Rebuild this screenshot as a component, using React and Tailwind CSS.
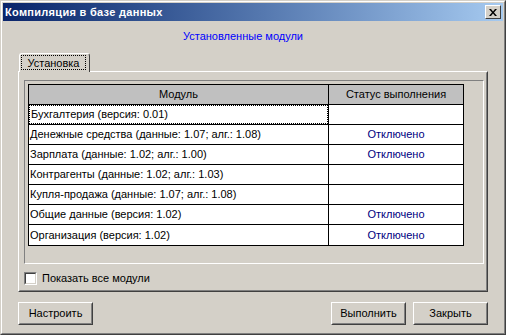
import React from 'react';

const rows = [
    { name: 'Бухгалтерия (версия: 0.01)', status: '', focus: true },
    { name: 'Денежные средства (данные: 1.07; алг.: 1.08)', status: 'Отключено' },
    { name: 'Зарплата (данные: 1.02; алг.: 1.00)', status: 'Отключено' },
    { name: 'Контрагенты (данные: 1.02; алг.: 1.03)', status: '' },
    { name: 'Купля-продажа (данные: 1.07; алг.: 1.08)', status: '' },
    { name: 'Общие данные (версия: 1.02)', status: 'Отключено' },
    { name: 'Организация (версия: 1.02)', status: 'Отключено' },
];

const font = { fontFamily: '"Liberation Sans", Arial, sans-serif' };

const Button = ({ children }) => (
    <div className="w-[75px] h-[23px] border border-t-white border-l-white border-r-[#404040] border-b-[#404040]">
        <div className="w-full h-full border border-transparent border-r-[#808080] border-b-[#808080] flex items-center justify-center text-[11px] text-black">
            {children}
        </div>
    </div>
);

const App = () => {
    return (
        <div className="w-[506px] h-[335px] bg-[#d4d0c8] border border-t-[#d4d0c8] border-l-[#d4d0c8] border-r-[#404040] border-b-[#404040]" style={font}>
            <div className="w-full h-full border border-t-white border-l-white border-r-[#808080] border-b-[#808080] p-px flex flex-col">
                {/* title bar */}
                <div className="h-[18px] flex items-center justify-between bg-gradient-to-r from-[#0a246a] to-[#a6caf0] pl-[2px] pr-[2px]">
                    <span className="text-white font-bold text-[11px] leading-[13px] tracking-[0.3px]">Компиляция в базе данных</span>
                    <div className="w-[16px] h-[14px] bg-[#d4d0c8] border border-t-white border-l-white border-r-[#404040] border-b-[#404040] flex items-center justify-center">
                        <svg width="8" height="7" viewBox="0 0 8 7">
                            <path d="M0 0h2l2 2.5L6 0h2L5 3.5 8 7H6L4 4.5 2 7H0l3-3.5z" fill="#000" />
                        </svg>
                    </div>
                </div>

                <div className="flex-1 flex flex-col px-[15px]">
                    <div className="h-[32px] pt-[9px] pr-[20px] text-center text-[11px] leading-[13px] text-[#0000ff]">Установленные модули</div>

                    {/* tab strip */}
                    <div className="h-[18px] flex relative z-10">
                        <div className="w-[71px] h-[19px] ml-px bg-[#d4d0c8] border border-b-0 border-t-white border-l-white border-r-[#404040] rounded-t-[3px] pt-px pl-px">
                            <div className="w-[65px] h-[15px] border border-dotted border-black flex items-center justify-center text-[11px] leading-[12px] text-black">Установка</div>
                        </div>
                    </div>

                    {/* tab panel */}
                    <div className="h-[221px] border border-t-white border-l-white border-r-[#404040] border-b-[#404040]">
                        <div className="w-full h-full border border-transparent border-r-[#808080] border-b-[#808080] pl-[4px] pr-[2px] pt-[7px] flex flex-col">
                            <div className="h-[184px] border border-t-[#808080] border-l-[#808080] border-r-white border-b-white p-[3px]">
                                <div className="w-[436px] border border-black bg-white text-[11px] text-black">
                                    <div className="flex h-[20px] border-b border-black bg-[#c0c0c0]">
                                        <div className="w-[300px] border-r border-black flex items-center justify-center">Модуль</div>
                                        <div className="flex-1 flex items-center justify-center">Статус выполнения</div>
                                    </div>
                                    {rows.map((r, i) => (
                                        <div key={i} className={'flex h-[20px] ' + (i < rows.length - 1 ? 'border-b border-black' : '')}>
                                            <div className="w-[300px] border-r border-black flex items-stretch">
                                                <div className={'flex-1 flex items-center pl-px ' + (r.focus ? 'border border-dotted border-black' : '')}>{r.name}</div>
                                            </div>
                                            <div className="flex-1 flex items-center justify-center text-[#000080]">{r.status}</div>
                                        </div>
                                    ))}
                                </div>
                            </div>
                            <div className="flex items-center mt-[6px] gap-[5px]">
                                <div className="w-[13px] h-[13px] bg-white border border-t-[#808080] border-l-[#808080] border-r-white border-b-white">
                                    <div className="w-full h-full border border-transparent border-t-[#404040] border-l-[#404040] border-r-[#d4d0c8] border-b-[#d4d0c8]" />
                                </div>
                                <span className="text-[11px] text-black">Показать все модули</span>
                            </div>
                        </div>
                    </div>

                    {/* buttons */}
                    <div className="flex mt-[10px] gap-[7px]">
                        <Button>Настроить</Button>
                        <div className="flex-1" />
                        <Button>Выполнить</Button>
                        <Button>Закрыть</Button>
                    </div>
                </div>
            </div>
        </div>
    );
};

export default App;
